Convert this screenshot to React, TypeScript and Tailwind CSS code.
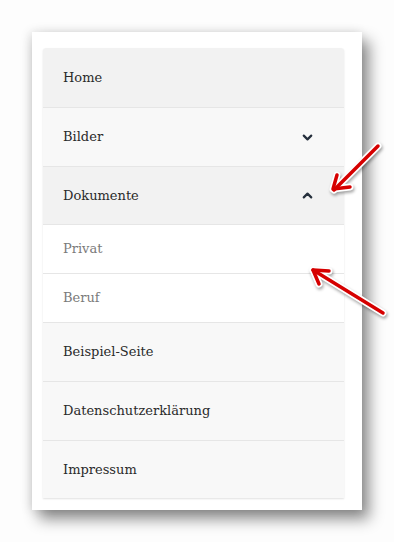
import { ChevronDown, ChevronUp } from "lucide-react"

type Item = {
    label: string
    sub?: boolean
    open?: boolean
    closed?: boolean
    bg: string
    h: string
}

const items: Item[] = [
    { label: "Home", bg: "bg-[#f2f2f2]", h: "h-[59px]" },
    { label: "Bilder", bg: "bg-[#f8f8f8]", h: "h-[59px]", closed: true },
    { label: "Dokumente", bg: "bg-[#f2f2f2]", h: "h-[58px]", open: true },
    { label: "Privat", bg: "bg-white", h: "h-[49px]", sub: true },
    { label: "Beruf", bg: "bg-white", h: "h-[49px]", sub: true },
    { label: "Beispiel-Seite", bg: "bg-[#f8f8f8]", h: "h-[59px]" },
    { label: "Datenschutzerklärung", bg: "bg-[#f8f8f8]", h: "h-[59px]" },
    { label: "Impressum", bg: "bg-[#f8f8f8]", h: "h-[58px]" },
]

const Arrow = ({ d, head }: { d: string; head: string }) => (
    <g strokeLinecap="round" strokeLinejoin="round" fill="none">
        <path d={d} stroke="#fff" strokeWidth="7" />
        <path d={head} stroke="#fff" strokeWidth="7" />
        <path d={d} stroke="#d60000" strokeWidth="3.5" />
        <path d={head} stroke="#d60000" strokeWidth="3.5" />
    </g>
)

const App = () => {
    return (
        <div className="relative w-[394px] h-[542px] bg-[#fdfdfd] pt-[32px] pl-[32px]" style={{ fontFamily: '"DejaVu Serif", serif' }}>
            <div className="w-[330px] bg-white pt-[16px] pl-[11px] pr-[18px] pb-[12px] shadow-[7px_9px_14px_rgba(0,0,0,0.45),-2px_0_10px_rgba(0,0,0,0.12)]">
                <ul className="rounded-t-[3px] overflow-hidden shadow-[0_1px_2px_rgba(0,0,0,0.12)]">
                    {items.map((it, i) => (
                        <li
                            key={it.label}
                            className={`${it.bg} ${it.h} flex items-center justify-between pl-[20px] pr-[29px] ${i > 0 ? "border-t border-[#e6e6e6]" : ""}`}
                        >
                            <span className={`text-[13px] ${it.sub ? "text-[#7a7a7a]" : "text-[#2a2a2a]"}`}>{it.label}</span>
                            {it.closed && <ChevronDown size={15} strokeWidth={3.5} className="text-[#26303d]" />}
                            {it.open && <ChevronUp size={15} strokeWidth={3.5} className="text-[#26303d]" />}
                        </li>
                    ))}
                </ul>
            </div>
            <svg className="absolute inset-0" width="394" height="542" style={{ filter: "drop-shadow(1px 2px 1.5px rgba(0,0,0,0.35))" }}>
                <Arrow d="M378 146 L334 190" head="M337 175 L333 189 L350 187" />
                <Arrow d="M383 313 L313 270" head="M329 271 L313 270 L319 284" />
            </svg>
        </div>
    )
}

export default App
